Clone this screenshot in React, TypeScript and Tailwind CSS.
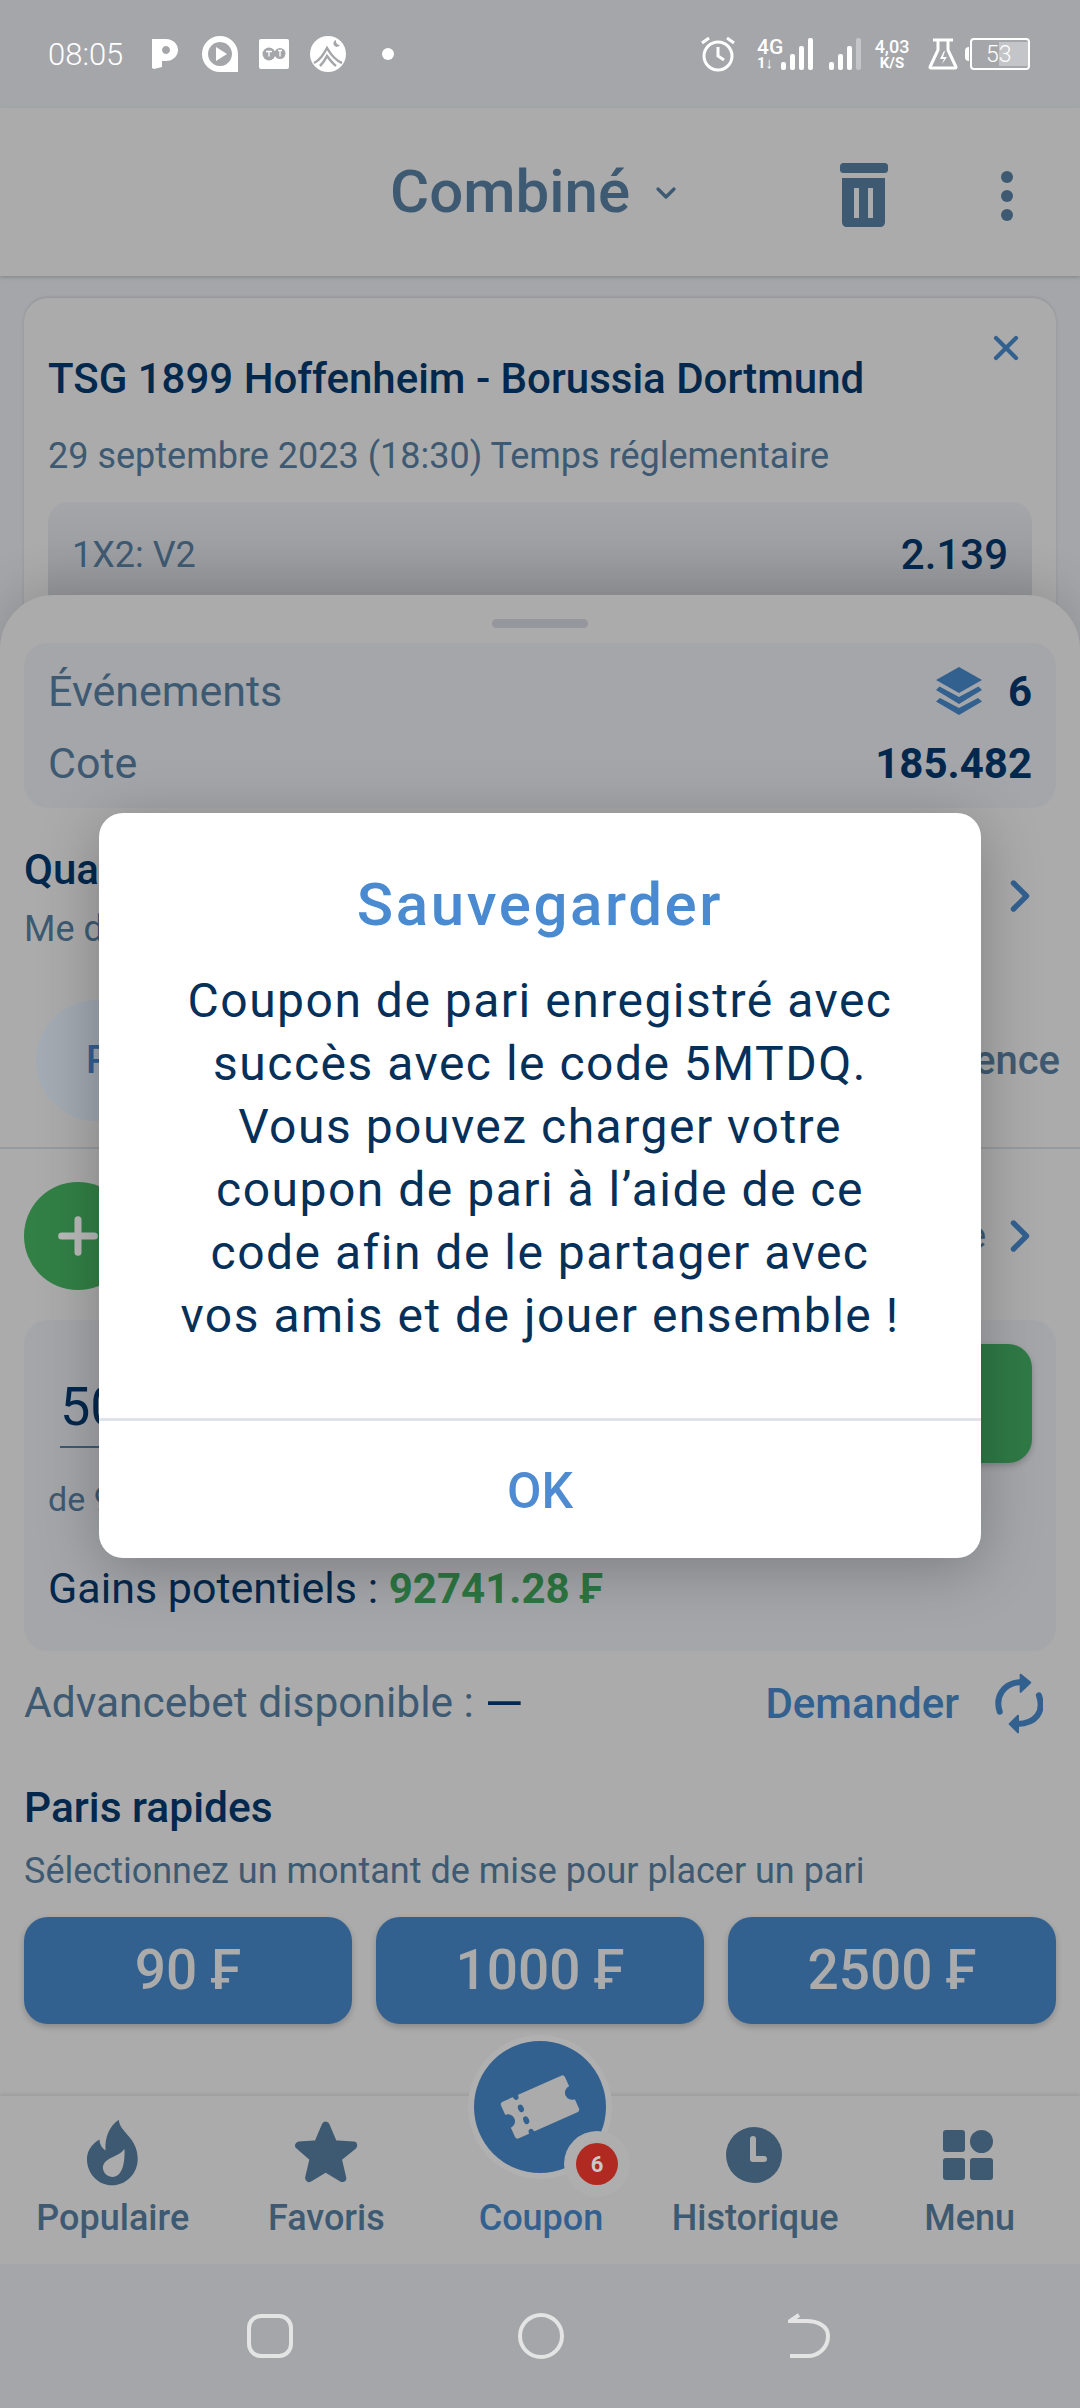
import { Plus, ChevronRight, ChevronDown, X } from 'lucide-react';

const navItems = [
  { label: 'Populaire', icon: <FlameIcon />, labelClass: 'text-[#3e5a72]' },
  { label: 'Favoris', icon: <StarIcon />, labelClass: 'text-[#3e5a72]' },
  { label: 'Coupon', icon: null, labelClass: 'ml-[2px] text-[#32608f]' },
  { label: 'Historique', icon: <ClockIcon />, labelClass: 'ml-[3px] text-[#3e5a72]' },
  { label: 'Menu', icon: <GridIcon />, labelClass: 'ml-[5px] text-[#3e5a72]' },
];

const quickBets = ['90 ₣', '1000 ₣', '2500 ₣'];

function FlameIcon() {
  return (
    <svg width="53" height="67" viewBox="50 40 158 202" className="text-[#3e5a72]">
      <path
        fill="currentColor"
        fillRule="evenodd"
        d="M148 42C150 80 205 95 205 160C205 205 170 240 128 240C85 240 52 205 52 160C52 140 65 115 90 102C90 115 95 125 108 135C105 95 120 60 148 42ZM165 130C150 155 105 155 100 185C100 205 115 215 130 215C150 215 168 190 165 130Z"
      />
    </svg>
  );
}

function StarIcon() {
  return (
    <svg width="64" height="62" viewBox="675 48 192 187" className="text-[#3e5a72]">
      <polygon
        fill="currentColor"
        stroke="currentColor"
        strokeWidth="24"
        strokeLinejoin="round"
        points="770,62 794,118 853,122 806,160 820,220 770,190 720,220 734,160 690,122 746,118"
      />
    </svg>
  );
}

function ClockIcon() {
  return (
    <svg width="56" height="56" viewBox="0 0 56 56" className="mt-[5px] text-[#3e5a72]">
      <circle cx="28" cy="28" r="28" fill="currentColor" />
      <path d="M27 12v20h11" fill="none" stroke="#ababab" strokeWidth="6" strokeLinecap="round" strokeLinejoin="round" />
    </svg>
  );
}

function GridIcon() {
  return (
    <svg width="50" height="50" viewBox="0 0 50 50" className="mt-[5px] ml-[2px] text-[#3e5a72]">
      <rect x="0" y="0" width="22" height="22" rx="3" fill="currentColor" />
      <circle cx="38.5" cy="11.5" r="11.5" fill="currentColor" />
      <rect x="0" y="28" width="22" height="22" rx="3" fill="currentColor" />
      <rect x="27" y="28" width="23" height="22" rx="3" fill="currentColor" />
    </svg>
  );
}

function TicketIcon() {
  return (
    <svg width="92" height="92" viewBox="0 0 92 92">
      <g transform="rotate(-24 46 46)">
        <path
          fill="#ababab"
          d="M14 26H78a3 3 0 0 1 3 3V39a7 7 0 0 0 0 14V63a3 3 0 0 1-3 3H14a3 3 0 0 1-3-3V53a7 7 0 0 0 0-14V29a3 3 0 0 1 3-3Z"
        />
        <ellipse cx="28" cy="26" rx="2.800" ry="4" fill="#32608f" />
        <ellipse cx="28" cy="39.500" rx="2.800" ry="4" fill="#32608f" />
        <ellipse cx="28" cy="52.500" rx="2.800" ry="4" fill="#32608f" />
        <ellipse cx="28" cy="66" rx="2.800" ry="4" fill="#32608f" />
      </g>
    </svg>
  );
}

function LayersIcon() {
  return (
    <svg width="46" height="48" viewBox="0 0 46 48" className="text-[#32608f]">
      <path fill="currentColor" d="M23 0L46 13L23 26L0 13Z" />
      <path fill="currentColor" d="M3.500 19.500L23 30L42.500 19.500L46 23L23 37L0 23Z" />
      <path fill="currentColor" d="M4 31L23 41L42 31L46 34.500L23 48L0 34.500Z" />
    </svg>
  );
}

function TrashIcon() {
  return (
    <svg width="48" height="64" viewBox="0 0 48 64" className="text-[#3e5a72]">
      <rect x="0" y="0" width="48" height="10" rx="3.500" fill="currentColor" />
      <path
        fill="currentColor"
        fillRule="evenodd"
        d="M2 15h43v44c0 3-2 5-5 5H7c-3 0-5-2-5-5Z M14 25h5v30h-5Z M28 25h5v30h-5Z"
      />
    </svg>
  );
}

function RefreshIcon() {
  return (
    <svg width="50" height="63" viewBox="40 30 150 190" className="text-[#32608f]">
      <path d="M60 150C45 105 70 62 128 60" fill="none" stroke="currentColor" strokeWidth="18" strokeLinecap="round" />
      <path d="M123 38L152 62L123 90Z" fill="currentColor" stroke="currentColor" strokeWidth="6" strokeLinejoin="round" />
      <path d="M178 100C195 150 170 185 112 187" fill="none" stroke="currentColor" strokeWidth="18" strokeLinecap="round" />
      <path d="M115 162L90 187L115 212Z" fill="currentColor" stroke="currentColor" strokeWidth="6" strokeLinejoin="round" />
    </svg>
  );
}

function StatusLeftIcons() {
  return (
    <>
      <svg width="26" height="31" viewBox="0 0 26 31" className="ml-[29px]">
        <path
          fill="#fff"
          fillRule="evenodd"
          d="M0 0h14c7 0 12 5 12 11s-5 11-12 11h-4v6l-8 2-2-1ZM14 7a4 4 0 1 0 .01 0Z"
        />
      </svg>
      <svg width="36" height="36" viewBox="0 0 36 36" className="ml-[24px]">
        <path fill="#fff" fillRule="evenodd" d="M18 0a18 18 0 0 1 18 18v18H18A18 18 0 0 1 18 0ZM18 6a12 12 0 1 0 .01 0Z" />
        <path fill="#fff" d="M14 11l11 7-11 7Z" />
      </svg>
      <svg width="30" height="30" viewBox="0 0 30 30" className="ml-[21px]">
        <rect width="30" height="30" rx="2" fill="#fff" />
        <circle cx="10" cy="15" r="6.500" fill="#a5a6aa" />
        <circle cx="21" cy="14.500" r="5.500" fill="#a5a6aa" />
        <path d="M7 12.500h6M10 12.500v5M19 11.500h4M21 11.500v6" fill="none" stroke="#fff" strokeWidth="1.300" />
      </svg>
      <svg width="36" height="36" viewBox="0 0 36 36" className="ml-[21px]">
        <circle cx="18" cy="18" r="18" fill="#fff" />
        <path d="M4 27c6-3 9-8 13-15 4 7 8 12 15 15M10 30c3-3 5-6 7-10 3 4 5 7 9 10" fill="none" stroke="#a5a6aa" strokeWidth="2.500" />
        <path d="M26 4a3.500 3.500 0 1 0 4 5 4 4 0 0 1-4-5Z" fill="#a5a6aa" />
      </svg>
      <span className="ml-[36px] h-3 w-3 rounded-full bg-white" />
    </>
  );
}

function SignalBars({ lastDim }: { lastDim?: boolean }) {
  return (
    <svg width="32" height="32" viewBox="0 0 32 32">
      <rect x="0" y="24" width="5" height="8" rx="2" fill="#fff" />
      <rect x="9" y="16" width="5" height="16" rx="2" fill="#fff" />
      <rect x="18" y="8" width="5" height="24" rx="2" fill="#fff" />
      <rect x="27" y="0" width="5" height="32" rx="2" fill={lastDim ? '#c4c5c8' : '#fff'} />
    </svg>
  );
}

function StatusRightIcons() {
  return (
    <>
      <svg width="36" height="36" viewBox="0 0 36 36">
        <circle cx="18" cy="20" r="14" fill="none" stroke="#fff" strokeWidth="3" />
        <path d="M18 11v9l6 4" fill="none" stroke="#fff" strokeWidth="3" />
        <path d="M2 7l7-5M34 7l-7-5" fill="none" stroke="#fff" strokeWidth="3" />
      </svg>
      <div className="ml-[21px] flex w-[25px] flex-col items-start text-white">
        <span className="text-[21px] leading-[18px] font-medium">4G</span>
        <span className="mt-[1px] text-[15px] leading-[13px] font-bold">1↓</span>
      </div>
      <div className="ml-[-1px]">
        <SignalBars />
      </div>
      <div className="ml-[16px]">
        <SignalBars lastDim />
      </div>
      <div className="ml-[12px] flex w-[38px] flex-col items-center text-white">
        <span className="text-[18px] leading-[18px] font-medium">4,03</span>
        <span className="text-[15px] leading-[15px] font-bold">K/S</span>
      </div>
      <svg width="30" height="32" viewBox="0 0 30 32" className="ml-[17px]">
        <path d="M5 2h20M10 2v10L2 29c0 1 0 1 1 1h24c1 0 1 0 1-1L20 12V2" fill="none" stroke="#fff" strokeWidth="3" strokeLinejoin="round" />
        <path d="M16 13l-4 8h4l-2 5 5-7h-4l2-6Z" fill="#fff" />
      </svg>
      <span className="ml-[7px] h-[14px] w-[4px] rounded-l-sm bg-white" />
      <div className="relative ml-[1px] flex h-[32px] w-[60px] items-center rounded-[4px] border-2 border-white">
        <div className="ml-[27px] h-[24px] w-[29px] bg-[#c4c5c8]" />
        <span className="absolute left-[14px] text-[23px] leading-none font-light text-white">53</span>
      </div>
    </>
  );
}

function BottomNav() {
  return (
    <div className="relative z-20 grid h-[168px] grid-cols-5 bg-[#ababab] px-[6px] shadow-[0_-2px_3px_rgba(0,0,0,0.08)]">
      {navItems.map((item) => (
        <div key={item.label} className="relative flex flex-col items-center">
          <div className="mt-[23px] flex h-[66px] items-center">{item.icon}</div>
          <span className={`mt-[11px] text-[36px] leading-[44px] font-medium ${item.labelClass}`}>{item.label}</span>
          {item.label === 'Coupon' && (
            <div className="absolute top-[-55px] flex h-[132px] w-[132px] items-center justify-center rounded-full bg-[#32608f] shadow-[0_0_0_6px_#b0b0b0]">
              <TicketIcon />
              <span className="absolute right-[-12px] bottom-[-12px] flex h-[42px] w-[42px] items-center justify-center rounded-full bg-[#b02a22] text-[22px] font-bold text-[#c9c9c9] shadow-[0_0_0_12px_#aeaeae]">
                6
              </span>
            </div>
          )}
        </div>
      ))}
    </div>
  );
}

function SaveDialog() {
  return (
    <div className="absolute inset-0 z-30 flex items-start justify-center pt-[813px]">
      <div className="flex h-[745px] w-[882px] flex-col items-center rounded-[24px] bg-white shadow-[0_10px_60px_rgba(0,0,0,0.25)]">
        <h2 className="mt-[56px] text-[60px] leading-[72px] font-medium tracking-[2.6px] text-[#4a8ad0]">Sauvegarder</h2>
        <p className="mt-[28px] w-[800px] text-center text-[48px] leading-[63px] tracking-[1.5px] text-[#05305a]">
          Coupon de pari enregistré avec
          <br />
          succès avec le code 5MTDQ.
          <br />
          Vous pouvez charger votre
          <br />
          coupon de pari à l’aide de ce
          <br />
          code afin de le partager avec
          <br />
          vos amis et de jouer ensemble !
        </p>
        <div className="mt-[71px] h-[3px] w-full bg-[#e0e4ea]" />
        <button className="flex h-[136px] items-center pt-[4px] text-[50px] font-medium text-[#4f8bd0]">OK</button>
      </div>
    </div>
  );
}

export default function App() {
  return (
    <div className="relative flex h-[2408px] w-[1080px] flex-col overflow-hidden bg-[#a5a6aa] font-['Roboto',sans-serif] text-[#03284d]">
      {/* status bar */}
      <div className="flex h-[108px] items-center justify-between px-[48px] pr-[50px]">
        <div className="flex items-center">
          <span className="text-[31px] leading-none font-light text-white">08:05</span>
          <StatusLeftIcons />
        </div>
        <div className="flex items-center">
          <StatusRightIcons />
        </div>
      </div>

      {/* header */}
      <header className="relative z-10 flex h-[168px] items-center bg-[#ababab] shadow-[0_2px_3px_rgba(0,0,0,0.15)]">
        <div className="flex flex-1 items-center pl-[390px] text-[#3e5a72]">
          <span className="text-[60px] leading-none font-medium">Combiné</span>
          <ChevronDown className="ml-[20px] mt-[2px]" size={32} strokeWidth={2.5} />
        </div>
        <div className="mr-[192px] mt-[6px]">
          <TrashIcon />
        </div>
        <div className="absolute right-[67px] top-[63px] flex flex-col gap-[7px]">
          <span className="h-3 w-3 rounded-full bg-[#3e5a72]" />
          <span className="h-3 w-3 rounded-full bg-[#3e5a72]" />
          <span className="h-3 w-3 rounded-full bg-[#3e5a72]" />
        </div>
      </header>

      {/* selected event, runs under the sheet */}
      <div className="relative mx-[24px] mt-[22px] h-[360px] rounded-t-[24px] bg-[#ababab] px-[24px] shadow-[0_-1px_3px_rgba(0,0,0,0.12)]">
        <X className="absolute right-[30px] top-[30px] text-[#32608f]" size={40} strokeWidth={2.5} />
        <div className="pt-[53px] text-[42px] leading-[56px] font-medium">TSG 1899 Hoffenheim - Borussia Dortmund</div>
        <div className="mt-[27px] text-[36px] leading-[44px] text-[#3e5a72]">29 septembre 2023 (18:30) Temps réglementaire</div>
        <div className="mt-[24px] flex h-[150px] items-start justify-between rounded-[20px] bg-gradient-to-b from-[#a5a6aa] to-[#8e8f91] px-[24px] pt-[29px]">
          <span className="text-[36px] leading-[48px] text-[#3e5a72]">1X2: V2</span>
          <span className="text-[42px] leading-[48px] font-medium">2.139</span>
        </div>
      </div>

      {/* bottom sheet */}
      <div className="relative z-10 mt-[-63px] flex-1 rounded-t-[54px] bg-[#ababab] px-[24px] shadow-[0_-10px_50px_rgba(0,0,0,0.14)]">
        <div className="mx-auto mt-[24px] h-[9px] w-[96px] rounded-full bg-[#95979d]" />
        <div className="mt-[15px] h-[165px] rounded-[24px] bg-[#a5a6aa] px-[24px] pt-[12px]">
          <div className="flex h-[72px] items-center justify-between">
            <span className="text-[43px] text-[#3e5a72]">Événements</span>
            <div className="flex items-center gap-[26px]">
              <LayersIcon />
              <span className="text-[42px] font-bold">6</span>
            </div>
          </div>
          <div className="flex h-[72px] items-center justify-between">
            <span className="text-[43px] text-[#3e5a72]">Cote</span>
            <span className="text-[42px] font-bold">185.482</span>
          </div>
        </div>

        <div className="mt-[39px] flex h-[103px] items-center justify-between">
          <div>
            <div className="text-[42px] leading-[44px] font-medium">Quand les cotes changent</div>
            <div className="mt-[17px] text-[36px] leading-[40px] text-[#3e5a72]">Me demander à chaque fois</div>
          </div>
          <ChevronRight className="mr-[10px] mb-[6px] text-[#32608f]" size={52} strokeWidth={2.5} />
        </div>

        <div className="ml-[12px] mt-[50px] flex h-[121px] items-center justify-between">
          <div className="flex h-[121px] w-[300px] items-center rounded-full bg-gradient-to-r from-[#a3abb4] to-[#989ba0] pl-[50px] text-[38px] font-medium text-[#32608f]">
            Par défaut
          </div>
          <span className="mr-[-4px] text-[40px] font-medium text-[#3e5a72]">Toute différence</span>
        </div>

        <div className="mx-[-24px] mt-[26px] h-[2px] bg-[#979aa0]" />

        <div className="mt-[33px] flex h-[108px] items-center justify-between">
          <div className="flex h-[108px] w-[108px] items-center justify-center rounded-full bg-[#328046]">
            <Plus className="text-[#b9b9b9]" size={56} strokeWidth={3} />
          </div>
          <div className="flex items-center">
            <span className="text-[36px] text-[#3e5a72]">Code promo disponible</span>
            <ChevronRight className="ml-[8px] mr-[10px] text-[#32608f]" size={52} strokeWidth={2.5} />
          </div>
        </div>

        <div className="mt-[30px] h-[331px] rounded-[24px] bg-[#a5a6aa] px-[24px]">
          <div className="flex items-start justify-between pt-[24px]">
            <div className="ml-[12px] mt-[30px] h-[74px] w-[280px] border-b-2 border-[#3e5a72] text-[54px] leading-[66px]">50</div>
            <div className="flex h-[119px] w-[420px] items-center justify-center rounded-[24px] bg-[#2f7a46] text-[40px] font-medium text-white shadow-[0_3px_6px_rgba(0,0,0,0.2)]">
              Parier
            </div>
          </div>
          <div className="mt-[16px] text-[34px] leading-[40px] text-[#3e5a72]">de 90 à 100000 ₣</div>
          <div className="mt-[45px] text-[43px] leading-[48px]">
            Gains potentiels : <span className="text-[42px] font-bold text-[#2d7642]">92741.28 ₣</span>
          </div>
        </div>

        <div className="mt-[22px] flex h-[60px] items-center justify-between">
          <span className="text-[42.5px] text-[#3e5a72]">
            Advancebet disponible : <span className="align-[-4px] text-[50px] leading-none text-[#03284d]">—</span>
          </span>
          <div className="flex items-center">
            <span className="text-[42px] font-medium text-[#32608f]">Demander</span>
            <div className="ml-[34px] mr-[13px]">
              <RefreshIcon />
            </div>
          </div>
        </div>

        <div className="mt-[53px] text-[42.5px] leading-[44px] font-medium">Paris rapides</div>
        <div className="mt-[21px] text-[36px] leading-[40px] text-[#3e5a72]">Sélectionnez un montant de mise pour placer un pari</div>

        <div className="mt-[26px] grid grid-cols-3 gap-[24px]">
          {quickBets.map((amount) => (
            <button
              key={amount}
              className="flex h-[107px] items-center justify-center rounded-[24px] bg-[#32608f] text-[55px] font-medium text-[#ababab] shadow-[0_3px_6px_rgba(0,0,0,0.2)]"
            >
              {amount}
            </button>
          ))}
        </div>
      </div>

      <BottomNav />

      {/* system navigation */}
      <div className="flex h-[144px] items-center">
        <span className="ml-[247px] h-[44px] w-[46px] rounded-[14px] border-[4px] border-[#e4e4e4]" />
        <span className="ml-[225px] h-[46px] w-[46px] rounded-full border-[4px] border-[#e4e4e4]" />
        <svg width="44" height="46" viewBox="0 0 44 46" className="ml-[224px]">
          <path d="M11 2L2 8H18C30 8 40 13 40 23C40 35 30 43 20 43H2" fill="none" stroke="#e4e4e4" strokeWidth="4" />
        </svg>
      </div>

      <SaveDialog />
    </div>
  );
}
